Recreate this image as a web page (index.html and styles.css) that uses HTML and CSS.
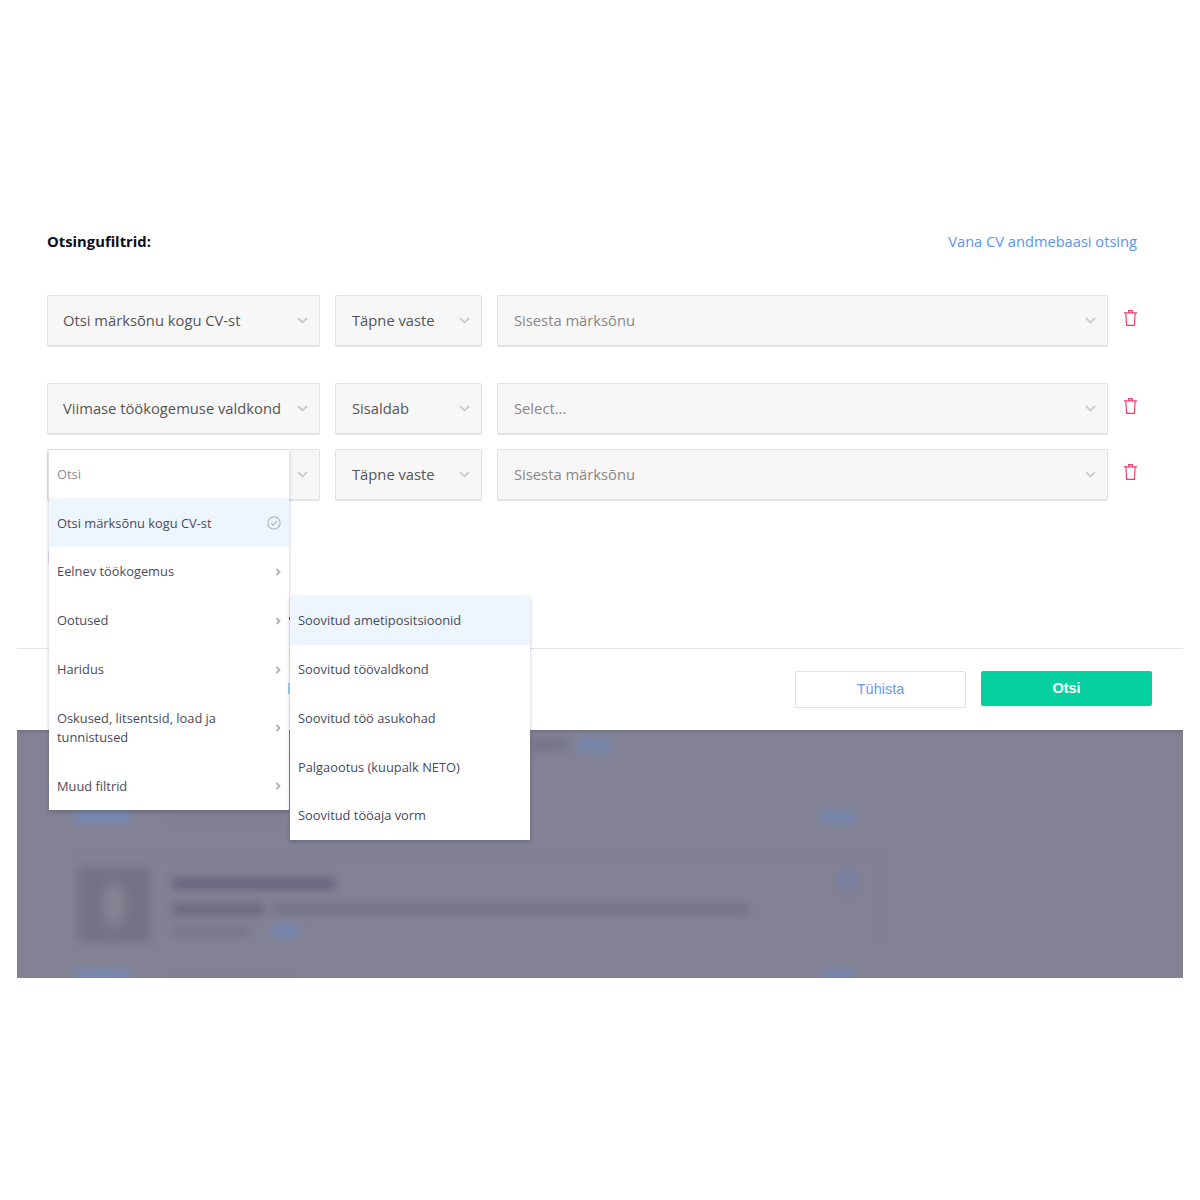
FILE: index.html
```html
<!doctype html>
<html>
  <head>
    <title>Otsingufiltrid</title>
    <meta charset="utf-8"/>
    <link rel="stylesheet" href="styles.css">
  </head>
  <body>
    <div class="panel">
      <div class="filters">
        <div class="filters-head">
          <div class="filters-title">Otsingufiltrid:</div>
          <a class="old-search">Vana CV andmebaasi otsing</a>
        </div>

        <div class="row">
          <div class="field field-type"><span>Otsi märksõnu kogu CV-st</span><svg class="chev" viewBox="0 0 11 7"><path d="M1 1l4.500 4.500L10 1"/></svg></div>
          <div class="field field-match"><span>Täpne vaste</span><svg class="chev" viewBox="0 0 11 7"><path d="M1 1l4.500 4.500L10 1"/></svg></div>
          <div class="field field-value placeholder"><span>Sisesta märksõnu</span><svg class="chev" viewBox="0 0 11 7"><path d="M1 1l4.500 4.500L10 1"/></svg></div>
          <svg class="trash" viewBox="0 0 14 18"><path d="M0 3.500h14M5 3.500V1h4v2.500M2 3.500l.8 13.500h8.400l.8-13.500"/></svg>
        </div>

        <div class="row row-near">
          <div class="field field-type"><span>Viimase töökogemuse valdkond</span><svg class="chev" viewBox="0 0 11 7"><path d="M1 1l4.500 4.500L10 1"/></svg></div>
          <div class="field field-match"><span>Sisaldab</span><svg class="chev" viewBox="0 0 11 7"><path d="M1 1l4.500 4.500L10 1"/></svg></div>
          <div class="field field-value placeholder"><span>Select...</span><svg class="chev" viewBox="0 0 11 7"><path d="M1 1l4.500 4.500L10 1"/></svg></div>
          <svg class="trash" viewBox="0 0 14 18"><path d="M0 3.500h14M5 3.500V1h4v2.500M2 3.500l.8 13.500h8.400l.8-13.500"/></svg>
        </div>

        <div class="row">
          <div class="field field-type">
            <svg class="chev" viewBox="0 0 11 7"><path d="M1 1l4.500 4.500L10 1"/></svg>
            <div class="peek peek-pink"></div>
            <div class="peek peek-blue"></div>
            <div class="peek peek-dot"></div>

            <div class="menu">
              <div class="menu-search">Otsi</div>
              <div class="menu-item active">
                <span>Otsi märksõnu kogu CV-st</span>
                <svg class="check" viewBox="0 0 14 14"><circle cx="7" cy="7" r="6.200"/><path d="M4.200 7.200l2 2 3.600-4"/></svg>
              </div>
              <div class="menu-item">
                <span>Eelnev töökogemus</span>
                <svg class="arrow" viewBox="0 0 6 8"><path d="M1.500 1l3 3-3 3"/></svg>
              </div>
              <div class="menu-item">
                <span>Ootused</span>
                <svg class="arrow" viewBox="0 0 6 8"><path d="M1.500 1l3 3-3 3"/></svg>
                <div class="submenu">
                  <div class="menu-item active">Soovitud ametipositsioonid</div>
                  <div class="menu-item">Soovitud töövaldkond</div>
                  <div class="menu-item">Soovitud töö asukohad</div>
                  <div class="menu-item">Palgaootus (kuupalk NETO)</div>
                  <div class="menu-item">Soovitud tööaja vorm</div>
                </div>
              </div>
              <div class="menu-item">
                <span>Haridus</span>
                <svg class="arrow" viewBox="0 0 6 8"><path d="M1.500 1l3 3-3 3"/></svg>
              </div>
              <div class="menu-item menu-item-tall">
                <span>Oskused, litsentsid, load ja<br>tunnistused</span>
                <svg class="arrow" viewBox="0 0 6 8"><path d="M1.500 1l3 3-3 3"/></svg>
              </div>
              <div class="menu-item">
                <span>Muud filtrid</span>
                <svg class="arrow" viewBox="0 0 6 8"><path d="M1.500 1l3 3-3 3"/></svg>
              </div>
            </div>
          </div>
          <div class="field field-match"><span>Täpne vaste</span><svg class="chev" viewBox="0 0 11 7"><path d="M1 1l4.500 4.500L10 1"/></svg></div>
          <div class="field field-value placeholder"><span>Sisesta märksõnu</span><svg class="chev" viewBox="0 0 11 7"><path d="M1 1l4.500 4.500L10 1"/></svg></div>
          <svg class="trash" viewBox="0 0 14 18"><path d="M0 3.500h14M5 3.500V1h4v2.500M2 3.500l.8 13.500h8.400l.8-13.500"/></svg>
        </div>
      </div>

      <div class="actions">
        <div class="btn btn-cancel">Tühista</div>
        <div class="btn btn-search">Otsi</div>
      </div>

      <!-- results behind the overlay, blurred, nothing readable -->
      <div class="results">
        <div class="results-blur">
          <div class="res-top"><i class="b-dark"></i><i class="b-blue"></i></div>
          <div class="res-meta"><i class="b-tag"></i><i class="b-faint"></i><i class="b-tag-r"></i></div>
          <div class="res-card">
            <div class="b-logo"></div>
            <div class="res-body">
              <i class="b-title"></i>
              <div class="res-line"><i class="b-strong"></i><i class="b-long"></i></div>
              <div class="res-line2"><i class="b-short"></i><i class="b-link"></i></div>
            </div>
            <i class="b-icon"></i>
          </div>
          <div class="res-meta res-meta-last"><i class="b-tag"></i><i class="b-faint"></i><i class="b-tag-r"></i></div>
        </div>
      </div>
    </div>
  </body>
</html>
```

FILE: styles.css
```css
html {
  box-sizing: border-box;
}
*, *:before, *:after {
  box-sizing: inherit;
}

html,body{
  margin:0;
  padding:0;
  background:#fff;
  font-family:"Open Sans", sans-serif;
}

.panel{
  margin:0 17px;
  height:978px;
}

.filters{
  padding:232px 46px 0 30px;
  height:649px;
  border-bottom:1px solid #e4e4e4;
}
.filters-head{
  display:flex;
  justify-content:space-between;
  align-items:center;
  height:18px;
  margin-bottom:45px;
}
.filters-title{
  font-size:14.800px;
  font-weight:700;
  color:#0d0d1c;
}
.old-search{
  font-size:14.650px;
  color:#5b93f5;
}

.row{
  display:flex;
  align-items:flex-start;
  gap:15px;
  margin-bottom:36px;
}
.row-near{
  margin-bottom:14px;
}
.field{
  position:relative;
  flex:none;
  display:flex;
  align-items:center;
  justify-content:space-between;
  height:52px;
  padding:0 11px 1px 15px;
  background:#f7f7f7;
  border:1px solid #e2e2e2;
  border-bottom-width:2px;
  border-radius:2px;
  font-size:14.750px;
  color:#555;
}
.field-type{
  width:273px;
}
.field-match{
  width:147px;
  padding-left:16px;
}
.field-value{
  width:611px;
  padding-left:16px;
}
.placeholder{
  color:#888;
}
.chev{
  width:11px;
  height:7px;
  margin-left:auto;
  fill:none;
  stroke:#ccc;
  stroke-width:1.800;
}
.trash{
  flex:none;
  width:13px;
  height:18px;
  margin:14px 0 0 1px;
  fill:none;
  stroke:#f0386b;
  stroke-width:1.200;
}

.menu{
  position:absolute;
  left:1px;
  top:0;
  width:239.500px;
  background:#fff;
  box-shadow:0 2px 4px rgba(30,30,60,.24);
  font-size:12.850px;
  color:#4a4a5c;
  z-index:5;
}
.menu-search{
  height:48.300px;
  line-height:48px;
  padding-left:8px;
  color:#8a8a98;
}
.menu-item{
  position:relative;
  display:flex;
  align-items:center;
  justify-content:space-between;
  height:48.800px;
  line-height:19px;
  padding:1px 8px 0;
}
.menu-item-tall{
  height:67.700px;
}
.menu-item.active{
  background:#edf5fe;
}
.check{
  width:14px;
  height:14px;
  margin-top:-1px;
  fill:none;
  stroke:#b4b4c0;
  stroke-width:1.200;
}
.arrow{
  width:6px;
  height:8px;
  fill:none;
  stroke:#b0b0b4;
  stroke-width:1.800;
}
.submenu{
  position:absolute;
  left:241px;
  top:0;
  width:239.500px;
  background:#fff;
  box-shadow:0 2px 4px rgba(30,30,60,.24);
}

.peek{
  position:absolute;
}
.peek-pink{
  left:0;
  top:101px;
  width:1px;
  height:12px;
  background:#efd3f5;
}
.peek-blue{
  left:240px;
  top:233px;
  width:2px;
  height:11px;
  background:#8fc0ee;
  z-index:6;
}
.peek-dot{
  left:241px;
  top:167px;
  width:1px;
  height:3px;
  background:#555;
  z-index:6;
}

.actions{
  display:flex;
  align-items:flex-start;
  justify-content:flex-end;
  gap:15px;
  height:81px;
  padding:22px 31px 0 0;
}
.btn{
  width:171px;
  text-align:center;
  font-family:"Liberation Sans", Arial, sans-serif;
  font-size:14.500px;
}
.btn-cancel{
  height:37px;
  line-height:35px;
  border:1px solid #e2e2e2;
  border-radius:2px;
  color:#6a9bf5;
}
.btn-search{
  height:35px;
  line-height:35px;
  background:#07d0a0;
  border-radius:2px;
  color:#fff;
  font-weight:700;
}

.results{
  height:248px;
  background:#838294;
  overflow:hidden;
  box-shadow:inset 0 2px 2px rgba(60,60,80,.2);
}
.results-blur{
  filter:blur(4px);
  padding:8px 0 0 58px;
}
.results i{
  display:block;
}
.res-top{
  display:flex;
  gap:12px;
  padding-left:455px;
  height:14px;
}
.b-dark{
  width:35px;
  background:#75748a;
}
.b-blue{
  width:35px;
  background:#7486ab;
}
.res-meta{
  display:flex;
  align-items:center;
  width:780px;
  height:18px;
  margin-top:56px;
}
.b-tag{
  width:55px;
  height:12px;
  background:#7488b4;
}
.b-faint{
  width:120px;
  height:7px;
  margin-left:42px;
  background:#7e7d8f;
}
.b-tag-r{
  width:34px;
  height:14px;
  margin-left:auto;
  background:#7486ab;
}
.res-card{
  display:flex;
  align-items:flex-start;
  width:807px;
  margin-top:29px;
  padding:11px 0 0 3px;
  border-top:1px solid #7b7a8c;
  border-right:1px solid #7e7d8f;
}
.b-logo{
  flex:none;
  width:72px;
  height:75px;
  background:radial-gradient(ellipse 16px 30px at center, #848394 50%, #737285 100%);
}
.res-body{
  width:580px;
  margin-left:22px;
  padding-top:10px;
}
.b-title{
  width:163px;
  height:13px;
  background:#69687d;
}
.res-line{
  display:flex;
  gap:8px;
  margin-top:13px;
}
.b-strong{
  width:92px;
  height:12px;
  background:#6b6a7f;
}
.b-long{
  width:476px;
  height:10px;
  margin-top:1px;
  background:#727186;
}
.res-line2{
  display:flex;
  gap:22px;
  margin-top:12px;
}
.b-short{
  width:78px;
  height:9px;
  background:#747386;
}
.b-link{
  width:26px;
  height:13px;
  margin-top:-3px;
  background:#7286b0;
}
.b-icon{
  width:20px;
  height:26px;
  margin-left:86px;
  border-radius:50%;
  background:#7a80a0;
}
.res-meta-last{
  margin-top:25px;
}
```
